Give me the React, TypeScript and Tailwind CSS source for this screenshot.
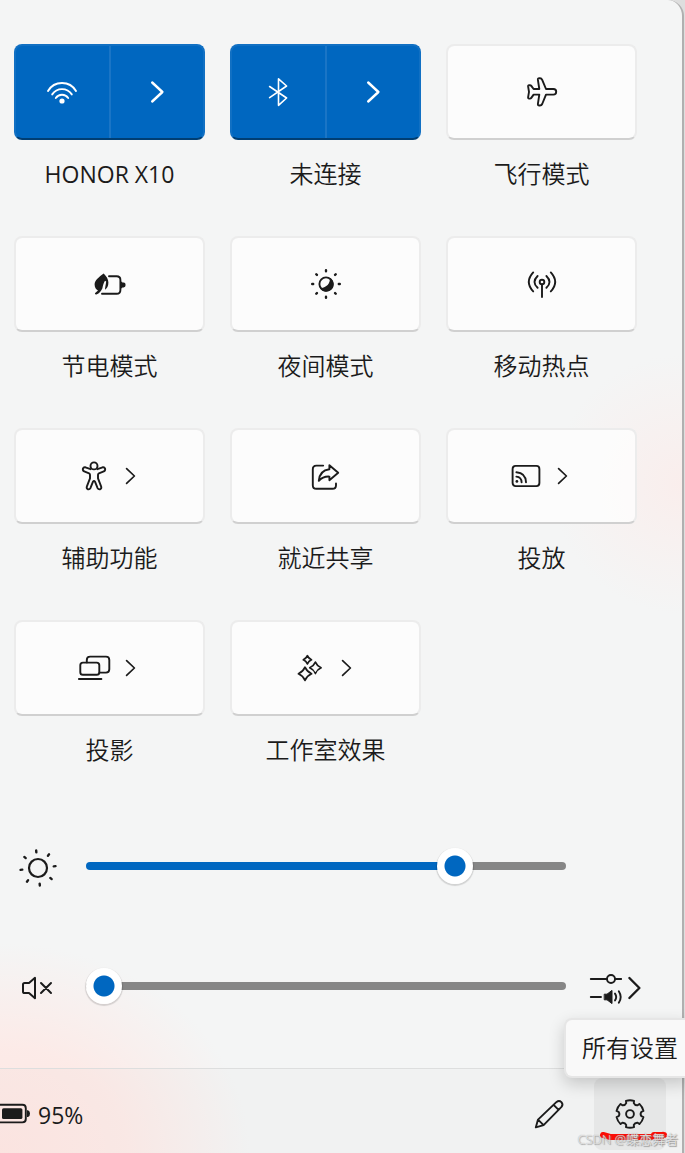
import { useState, type ReactNode } from "react";

type IconProps = { children: ReactNode; className?: string; size?: string };

function Icon({ children, className = "h-8 w-8", size = "32 32" }: IconProps) {
  return (
    <svg
      viewBox={`0 0 ${size}`}
      className={`shrink-0 overflow-visible ${className}`}
      fill="none"
      stroke="currentColor"
      strokeWidth="1.9"
      strokeLinecap="round"
      strokeLinejoin="round"
      aria-hidden="true"
    >
      {children}
    </svg>
  );
}

function polar(cx: number, cy: number, r: number, deg: number) {
  const a = (deg * Math.PI) / 180;
  return `${(cx + r * Math.cos(a)).toFixed(2)} ${(cy + r * Math.sin(a)).toFixed(2)}`;
}

function Rays({ c, from, to, turn = 0 }: { c: number; from: number; to: number; turn?: number }) {
  const d = [0, 45, 90, 135, 180, 225, 270, 315]
    .map((a) => `M${polar(c, c, from, a + turn)}L${polar(c, c, to, a + turn)}`)
    .join("");
  return <path d={d} strokeWidth="2.4" />;
}

const gearPath =
  [0, 60, 120, 180, 240, 300]
    .map((a, i) => {
      const t = a - 90;
      return `${i === 0 ? "M" : "L"}${polar(16, 16, 13.8, t - 17)}Q${polar(16, 16, 14.4, t)} ${polar(16, 16, 13.8, t + 17)}L${polar(16, 16, 11.6, t + 19)}Q${polar(16, 16, 9.8, t + 30)} ${polar(16, 16, 11.6, t + 41)}`;
    })
    .join("") + "Z";

function star(cx: number, cy: number, r: number) {
  const k = r * 0.3;
  return `M${cx} ${cy - r}Q${cx + k} ${cy - k} ${cx + r} ${cy}Q${cx + k} ${cy + k} ${cx} ${cy + r}Q${cx - k} ${cy + k} ${cx - r} ${cy}Q${cx - k} ${cy - k} ${cx} ${cy - r}Z`;
}

const WifiIcon = () => (
  <Icon>
    <path d="M2 15A16.25 16.25 0 0 1 30 15M6.2 18.4A11.8 11.8 0 0 1 25.8 18.4M9.8 22A7.6 7.6 0 0 1 22.2 22" />
    <circle cx="16" cy="25" r="2.6" fill="currentColor" stroke="none" />
  </Icon>
);

const BluetoothIcon = () => (
  <Icon>
    <path strokeWidth="1.6" d="M7.6 10.5 24.6 22 16.5 29.3V2.9L24.6 10 7.6 21.6" />
  </Icon>
);

const BigChevron = () => (
  <Icon>
    <path strokeWidth="2.4" d="M11.2 6.5 21.4 16 11.2 25.5" />
  </Icon>
);

const SmallChevron = () => (
  <Icon className="h-6 w-6" size="24 24">
    <path strokeWidth="1.7" d="M8.6 4.6 16.4 12 8.6 19.4" />
  </Icon>
);

const PlaneIcon = () => (
  <Icon>
    <path d="M20 13H27.4a2.8 2.8 0 0 1 0 5.6H20L16.2 28q-.7 1.5-2.2 1.5h-.8q-1.5 0-1.3-1.6L13.3 18.6H7.6L5.3 21.9q-.5.7-1.4.7H3q-1 0-.9-1.2L3 15.8 2.1 10.4q-.1-1.2.9-1.2h.9q.9 0 1.4.7L7.6 13H13.3L11.9 3.9q-.2-1.6 1.3-1.6h.8q1.5 0 2.2 1.5Z" />
  </Icon>
);

const SaverIcon = () => (
  <Icon>
    <path
      fill="currentColor"
      stroke="none"
      d="M9.7 5.4C5 9 .6 12 .6 16.4 .6 19.2 2 21.4 4 22.6L.9 25.2Q1.1 26.8 2.4 26.5C5.5 25.6 7.1 23 8.4 20.3 9 17.4 9.8 14.6 11 12.8L12.2 13.4C11.8 16.4 11.1 19 11 21.8 13 20.6 14.4 18.2 14.4 14.6 14.4 11 12.5 8.3 9.7 5.4Z"
    />
    <path d="M15 8.3H22.6Q26.4 8.3 26.4 12V22Q26.4 25.8 22.6 25.8H8" />
    <path fill="currentColor" stroke="none" d="M27 13.8H28.2V14.6H29.6Q31.6 14.6 31.6 17T29.6 19.4H28.2V20.2H27Z" />
  </Icon>
);

const NightIcon = () => (
  <Icon>
    <circle cx="16" cy="16" r="6.6" strokeWidth="1.9" />
    <path fill="currentColor" stroke="none" d="M19.8 9.8A7.4 7.4 0 1 1 9.8 19.8C15.6 20.6 20.6 15.8 19.8 9.8Z" />
    <Rays c={16} from={12.8} to={13.8} />
  </Icon>
);

const HotspotIcon = () => (
  <Icon>
    <circle cx="16" cy="14" r="2.3" />
    <path d="M16 16.4V29M11.6 8Q5.4 14 11.6 19.8M20.4 8Q26.6 14 20.4 19.8M7.2 4.4Q-1.6 14 7.2 23.4M24.8 4.4Q33.6 14 24.8 23.4" />
  </Icon>
);

const AccessIcon = () => (
  <Icon>
    <circle cx="16" cy="5.9" r="3.5" />
    <path d="M12.6 9.2 7.4 7.3Q5.6 6.9 4.9 8.6 4.5 10.6 6.2 11.3L11.1 13.3Q12 13.7 12 14.8V18.3L8.8 26.7Q8.3 28.6 10 29.3 11.7 29.6 12.4 28.1L15 21.7Q16 20 17 21.7L19.6 28.1Q20.3 29.6 22 29.3 23.7 28.6 23.2 26.7L20 18.3V14.8Q20 13.7 20.9 13.3L25.8 11.3Q27.5 10.6 27.1 8.6 26.4 6.9 24.6 7.3L19.4 9.2" />
  </Icon>
);

const ShareIcon = () => (
  <Icon>
    <path d="M13.2 5.6H6.4Q2.8 5.6 2.8 9.2V25.2Q2.8 28.8 6.4 28.8H22.4Q26 28.8 26 25.2V23.4" />
    <path d="M19.4 5.3 28.2 12.8 19.4 20.2V16.6Q13 16.2 8.8 20.8 9.6 10.4 19.4 9.2Z" />
  </Icon>
);

const CastIcon = () => (
  <Icon>
    <rect x="2.6" y="5.9" width="26.8" height="20.2" rx="3" />
    <path d="M6.4 16.6Q11.4 17 11.6 22.3M6.4 12.3Q15.6 13 16 22.3" />
    <circle cx="6.9" cy="21.4" r="1.4" fill="currentColor" stroke="none" />
  </Icon>
);

const ProjectIcon = () => (
  <Icon>
    <rect x="2.3" y="10.6" width="19" height="12.2" rx="2.6" />
    <path d="M8.8 10.4V8Q8.8 4.6 12.2 4.6H28Q31.3 4.6 31.3 8V17.3Q31.3 20.6 28 20.6H21.6M.9 27H23.4" />
  </Icon>
);

const SparkleIcon = () => (
  <Icon>
    <path strokeWidth="1.7" d={star(13.4, 7.8, 4.1) + star(21.4, 15.8, 5.7) + star(11, 21.8, 6.6)} />
  </Icon>
);

type TileData = { label: string; icon: ReactNode; more?: boolean; split?: boolean; latin?: boolean };

const tiles: TileData[] = [
  { label: "HONOR X10", icon: <WifiIcon />, split: true, latin: true },
  { label: "未连接", icon: <BluetoothIcon />, split: true },
  { label: "飞行模式", icon: <PlaneIcon /> },
  { label: "节电模式", icon: <SaverIcon /> },
  { label: "夜间模式", icon: <NightIcon /> },
  { label: "移动热点", icon: <HotspotIcon /> },
  { label: "辅助功能", icon: <AccessIcon />, more: true },
  { label: "就近共享", icon: <ShareIcon /> },
  { label: "投放", icon: <CastIcon />, more: true },
  { label: "投影", icon: <ProjectIcon />, more: true },
  { label: "工作室效果", icon: <SparkleIcon />, more: true },
];

function Tile({ label, icon, more, split, latin }: TileData) {
  return (
    <div className="flex flex-col gap-4">
      {split ? (
        <div className="flex h-24 overflow-hidden rounded-lg border-2 border-[#1170c3] border-b-[#003e73] bg-[#0067c0] text-white">
          <button type="button" aria-label={label} className="flex flex-1 items-center justify-center border-r-2 border-[#1a75c6]">
            {icon}
          </button>
          <button type="button" aria-label={`${label} 更多`} className="flex flex-1 items-center justify-center">
            <BigChevron />
          </button>
        </div>
      ) : (
        <button
          type="button"
          aria-label={label}
          className="flex h-24 items-center justify-center gap-2 rounded-lg border-2 border-[#ececec] border-b-[#d0d0d0] bg-[#fefefe]/80 bg-clip-padding"
        >
          {icon}
          {more && <SmallChevron />}
        </button>
      )}
      <span
        className={
          latin
            ? "text-center text-[23px]/9 font-normal whitespace-nowrap"
            : "text-center text-2xl/9 whitespace-nowrap"
        }
      >
        {label}
      </span>
    </div>
  );
}

function Slider({ label, initial }: { label: string; initial: number }) {
  const [value, setValue] = useState(initial);
  return (
    <input
      type="range"
      aria-label={label}
      min={0}
      max={100}
      value={value}
      onChange={(e) => setValue(Number(e.target.value))}
      style={{
        backgroundImage: `linear-gradient(to right, #0067c0 ${value}%, #868686 ${value}%)`,
      }}
      className="h-2 min-w-0 flex-1 appearance-none rounded-full [&::-webkit-slider-thumb]:h-9 [&::-webkit-slider-thumb]:w-9 [&::-webkit-slider-thumb]:appearance-none [&::-webkit-slider-thumb]:rounded-full [&::-webkit-slider-thumb]:bg-[radial-gradient(circle,#0067c0_10px,#ffffff_11px)] [&::-webkit-slider-thumb]:shadow-[0_1px_1px_1px_rgba(0,0,0,0.14)]"
    />
  );
}

export default function App() {
  return (
    <div className="min-h-screen overflow-hidden bg-[#dedede] pr-px font-['Open_Sans','Noto_Sans_CJK_SC',sans-serif] font-[350] text-[#1b1b1b]">
      <main className="flex min-h-screen flex-col rounded-tr-2xl border-r-2 border-[#b0b0b0] bg-[#f4f5f5] bg-[radial-gradient(circle_at_100%_42%,rgba(251,236,234,0.8),transparent_130px),radial-gradient(ellipse_250px_210px_at_0%_100%,rgba(255,229,225,0.9),rgba(255,231,227,0.75)_50%,transparent)] pt-11">
        <section className="grid grid-cols-3 gap-x-[25px] gap-y-11 pr-[45px] pl-[14px]">
          {tiles.map((t) => (
            <Tile key={t.label} {...t} />
          ))}
        </section>

        <section className="mt-[78px] flex flex-col gap-20 pr-10 pl-[18px]">
          <div className="flex h-10 items-center">
            <Icon className="mt-1 mr-7 h-10 w-10" size="40 40">
              <circle cx="20" cy="20" r="9" strokeWidth="2.2" />
              <Rays c={20} from={15.8} to={17.6} turn={-6} />
            </Icon>
            <Slider label="亮度" initial={79} />
            <span className="ml-6 w-[52px]" />
          </div>
          <div className="flex h-10 items-center">
            <button type="button" aria-label="取消静音" className="mt-1 mr-7">
              <Icon className="h-10 w-10" size="40 40">
                <path strokeWidth="2" d="M5 16.6Q5 15 6.6 15H11L17 9.8V30.2L11 25H6.6Q5 25 5 23.4ZM23 15 33 25M33 15 23 25" />
              </Icon>
            </button>
            <Slider label="音量" initial={0} />
            <button type="button" aria-label="选择声音输出" className="mt-1 ml-6 flex w-[52px] items-center">
              <Icon>
                <path d="M.8 7H16.6M25.4 7H31.2M.8 25H11" />
                <circle cx="21" cy="7" r="4" />
                <path fill="currentColor" strokeWidth="1" d="M14.6 22.2H17L22 18.4V31.6L17 27.8H14.6Z" />
                <path d="M25 21.6Q27.4 25 25 28.4M28.8 19.2Q32.6 25 28.8 30.8" />
              </Icon>
              <Icon className="h-8 w-5" size="20 32">
                <path strokeWidth="2.4" d="M7.4 6 17.4 16 7.4 26" />
              </Icon>
            </button>
          </div>
        </section>

        <footer className="relative mt-[62px] flex items-center border-t border-[#dddede] bg-black/[0.01] pt-[9px] pr-4 pb-[3px]">
          <button type="button" aria-label="电池 95%" className="mr-auto flex items-center gap-2">
            <Icon className="h-8 w-[30px]" size="30 32">
              <path d="M0 6.8H22.4Q25.8 6.8 25.8 10.2V21Q25.8 24.4 22.4 24.4H0" />
              <rect x="2" y="10.2" width="20.4" height="10.8" rx="1.6" fill="currentColor" stroke="none" />
              <path fill="currentColor" stroke="none" d="M27 12.2H28Q30 12.8 30 15.6T28 19H27Z" />
            </Icon>
            <span className="pt-[2px] text-[23px]/9 font-normal">95%</span>
          </button>
          <button type="button" aria-label="编辑快速设置" className="mr-7">
            <Icon>
              <path d="M1.8 29.4 4 21.6 22.6 3.9Q25.1 1.9 27.4 4.1 29.5 6.4 27.5 8.9L9.6 27.1ZM19.6 6.8 24.6 11.8M4 21.6 9.6 27.1" />
            </Icon>
          </button>
          <a href="#settings" aria-label="所有设置" className="flex h-18 w-18 items-center justify-center rounded-lg bg-black/[0.045]">
            <Icon>
              <path d={gearPath} />
              <circle cx="16" cy="16" r="3.9" />
            </Icon>
          </a>
          <div
            role="tooltip"
            className="absolute -top-[51px] -right-2 rounded-l-lg border-2 border-r-0 border-[#e6e6e6] bg-[#f9f9f9] py-[10px] pr-3 pl-4 text-2xl/9 whitespace-nowrap shadow-[0_6px_16px_rgba(0,0,0,0.18)]"
          >
            所有设置
          </div>
          <svg className="absolute right-[14px] bottom-[12px] h-[10px] w-[70px]" viewBox="0 0 70 10" fill="none" stroke="#fb0d05" strokeLinecap="round" aria-hidden="true">
            <path strokeWidth="6" d="M5 4 12 6H60L65 4" />
            <path strokeWidth="6" d="M56 4H66M62 7 65 4" />
          </svg>
          <span className="absolute right-1 bottom-1 text-[13px]/5 whitespace-nowrap text-white/75 [text-shadow:0_0_1px_#888,1px_1px_1px_#999]">
            CSDN @蝶恋舞者
          </span>
        </footer>
      </main>
    </div>
  );
}
